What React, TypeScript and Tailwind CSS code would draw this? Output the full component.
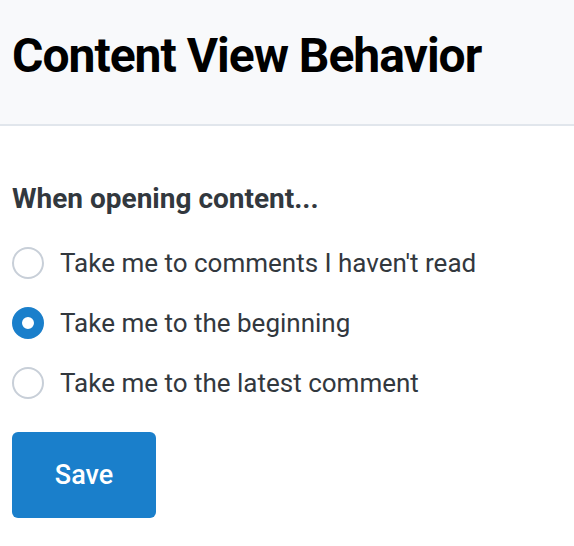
import React, { useState } from "react";

const options = [
  "Take me to comments I haven't read",
  "Take me to the beginning",
  "Take me to the latest comment",
];

export default function App() {
  const [selected, setSelected] = useState(1);
  return (
    <div className="w-[574px] h-[546px] bg-white font-['Roboto',sans-serif]">
      <div className="h-[126px] bg-[#f8f9fb] border-b-2 border-[#e1e6ec] px-3 pt-[32px]">
        <h1 className="text-[48px] font-bold text-black leading-[48px] tracking-[-1px]">
          Content View Behavior
        </h1>
      </div>
      <div className="px-3 pt-[57px]">
        <h2 className="text-[28px] font-bold text-[#32383e] leading-[32px]">
          When opening content...
        </h2>
        <div className="mt-[32px] flex flex-col gap-[28px]">
          {options.map((o, i) => (
            <label key={o} className="flex items-center gap-[16px] cursor-pointer" onClick={() => setSelected(i)}>
              <span
                className={
                  i === selected
                    ? "w-[32px] h-[32px] rounded-full border-[10px] border-[#1a7fcb] bg-white shrink-0"
                    : "w-[32px] h-[32px] rounded-full border-2 border-[#c8cfd8] bg-white shrink-0"
                }
              />
              <span className="text-[26px] text-[#32383e] leading-[32px]">{o}</span>
            </label>
          ))}
        </div>
        <button className="mt-[33px] w-[144px] h-[86px] rounded-[6px] bg-[#1a7fcb] text-white text-[27px] font-medium">
          Save
        </button>
      </div>
    </div>
  );
}
